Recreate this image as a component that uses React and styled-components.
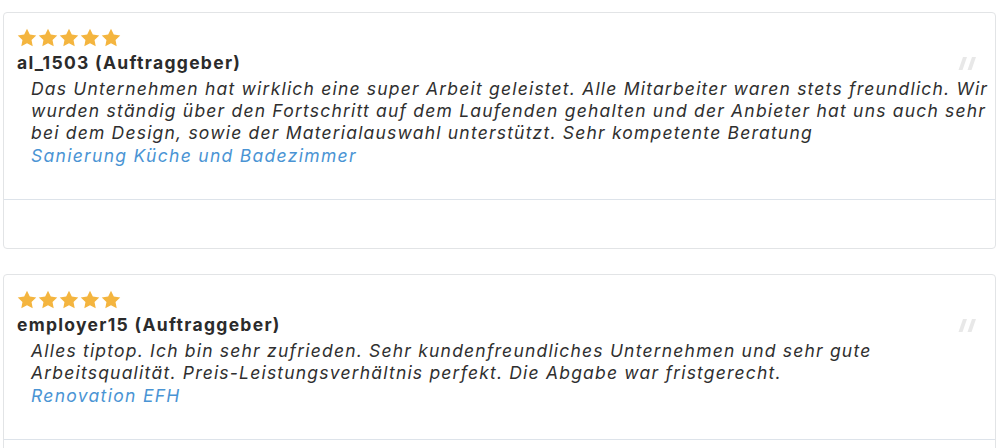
import React from "react";
import styled, { createGlobalStyle } from "styled-components";

const GlobalStyle = createGlobalStyle`
  body {
    margin: 0;
    background: #fff;
    font-family: Inter, "Noto Sans", "Liberation Sans", sans-serif;
  }
`;

const Page = styled.div`
  padding: 12px 4px 0 3px;
  display: flex;
  flex-direction: column;
  gap: 25px;
`;

const Card = styled.div`
  border: 1px solid #e2e4e6;
  border-radius: 4px;
  background: #fff;
`;

const Body = styled.div`
  padding: 14px 0 32px 13px;
`;

const Stars = styled.div`
  display: flex;
  gap: 1px;
  height: 20px;
  align-items: center;
`;

const HeaderRow = styled.div`
  display: flex;
  justify-content: space-between;
  align-items: center;
  padding-right: 18px;
  margin-top: 4px;
`;

const Name = styled.div`
  font-weight: 700;
  font-size: 17.5px;
  letter-spacing: 1.3px;
  line-height: 24px;
  color: #2b2b2b;
`;

const Text = styled.p`
  margin: 3px 0 0 14px;
  font-size: 17.5px;
  letter-spacing: 1.2px;
  line-height: 22px;
  font-style: italic;
  color: #2f2f2f;
  white-space: nowrap;
`;

const Project = styled.a`
  display: block;
  margin: 1px 0 0 14px;
  font-size: 17.5px;
  letter-spacing: 1.3px;
  line-height: 22px;
  font-style: italic;
  color: #4a94d4;
  text-decoration: none;
`;

const Footer = styled.div`
  border-top: 1px solid #dde3ea;
  height: ${(p) => p.h}px;
`;

const Star = () => (
  <svg width="20" height="19" viewBox="0 0 24 23">
    <path
      d="M12 0.8l3.4 7.2 7.8 1-5.7 5.4 1.4 7.8L12 18.4l-6.9 3.8 1.4-7.8L0.8 9l7.8-1z"
      fill="#f4b53f"
    />
  </svg>
);

const QuoteMark = () => (
  <svg width="19" height="13" viewBox="0 0 19 13">
    <path d="M5 0h4L4.5 13H0.5z" fill="#e8e8e8" />
    <path d="M14 0h4L13.5 13H9.5z" fill="#e8e8e8" />
  </svg>
);

const reviews = [
  {
    name: "al_1503 (Auftraggeber)",
    lines: [
      "Das Unternehmen hat wirklich eine super Arbeit geleistet. Alle Mitarbeiter waren stets freundlich. Wir",
      "wurden ständig über den Fortschritt auf dem Laufenden gehalten und der Anbieter hat uns auch sehr",
      "bei dem Design, sowie der Materialauswahl unterstützt. Sehr kompetente Beratung",
    ],
    project: "Sanierung Küche und Badezimmer",
    footer: 48,
  },
  {
    name: "employer15 (Auftraggeber)",
    lines: [
      "Alles tiptop. Ich bin sehr zufrieden. Sehr kundenfreundliches Unternehmen und sehr gute",
      "Arbeitsqualität. Preis-Leistungsverhältnis perfekt. Die Abgabe war fristgerecht.",
    ],
    project: "Renovation EFH",
    footer: 40,
  },
];

export default function App() {
  return (
    <>
      <GlobalStyle />
      <Page>
        {reviews.map((r) => (
          <Card key={r.name}>
            <Body>
              <Stars>
                {[0, 1, 2, 3, 4].map((i) => (
                  <Star key={i} />
                ))}
              </Stars>
              <HeaderRow>
                <Name>{r.name}</Name>
                <QuoteMark />
              </HeaderRow>
              <Text>
                {r.lines.map((l, i) => (
                  <React.Fragment key={i}>
                    {i > 0 && <br />}
                    {l}
                  </React.Fragment>
                ))}
              </Text>
              <Project href="#">{r.project}</Project>
            </Body>
            <Footer h={r.footer} />
          </Card>
        ))}
      </Page>
    </>
  );
}
